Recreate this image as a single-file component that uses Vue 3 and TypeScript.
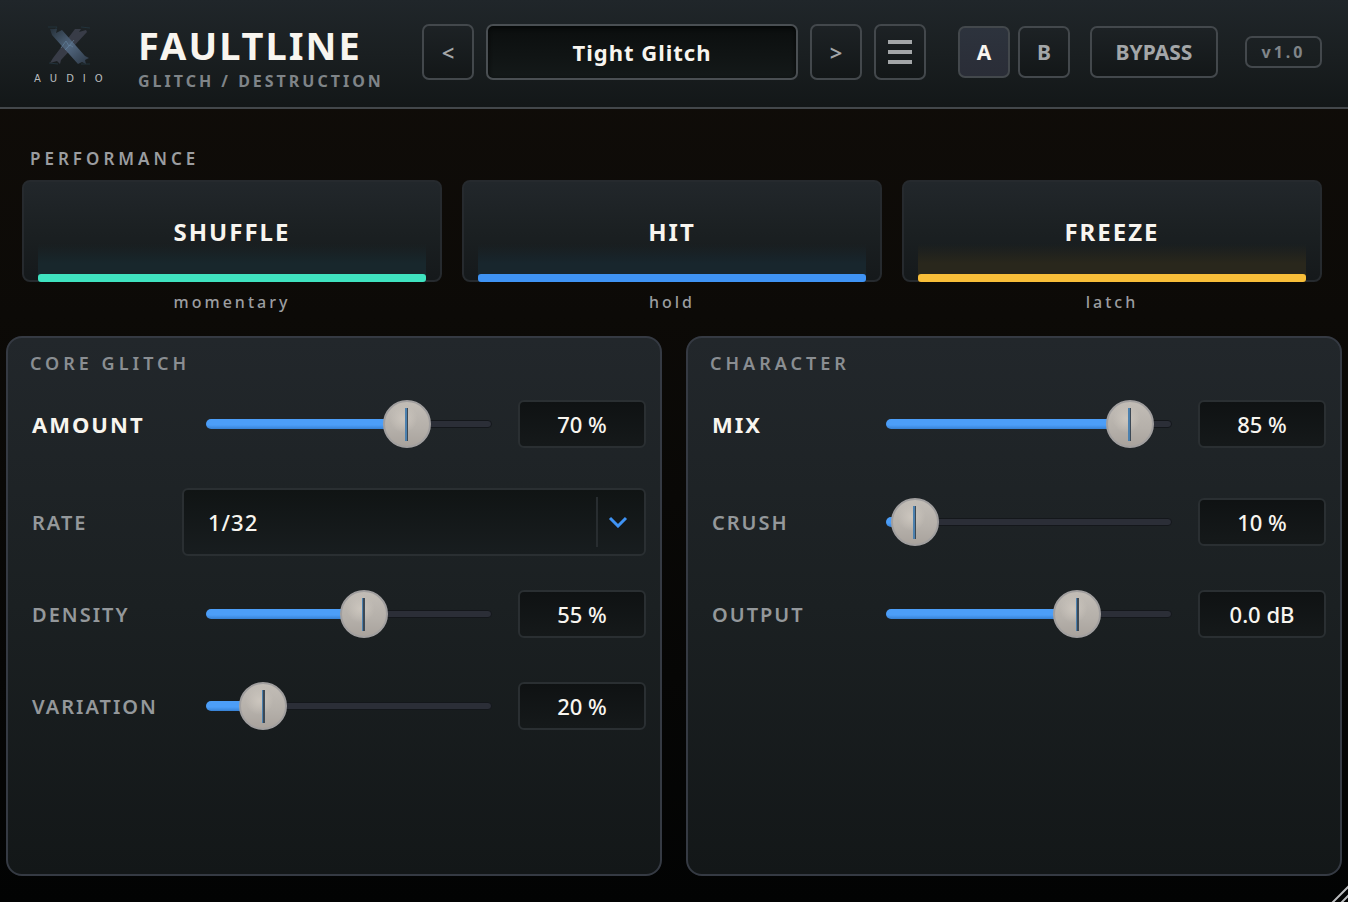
<script setup lang="ts">
import { computed, ref } from 'vue'

interface Pad {
  name: string
  mode: string
  tone: string
}

interface Param {
  id: string
  label: string
  min: number
  max: number
  step: number
  value: number
  unit: string
  digits: number
  strong?: boolean
}

const presets = ['Tight Glitch', 'Slow Tear', 'Broken Tape']
const presetIndex = ref(0)
const preset = computed(() => presets[presetIndex.value])
const stepPreset = (by: number) => {
  presetIndex.value = (presetIndex.value + by + presets.length) % presets.length
}

const slot = ref<'A' | 'B'>('A')
const bypass = ref(false)
const rate = ref('1/32')
const rates = ['1/4', '1/8', '1/16', '1/32']

const pads: Pad[] = [
  { name: 'SHUFFLE', mode: 'momentary', tone: 'teal' },
  { name: 'HIT', mode: 'hold', tone: 'blue' },
  { name: 'FREEZE', mode: 'latch', tone: 'amber' },
]

const percent = (id: string, label: string, value: number, strong = false): Param => ({
  id, label, value, strong, min: 0, max: 100, step: 1, unit: '%', digits: 0,
})

const params = ref<Record<string, Param>>({
  amount: percent('amount', 'AMOUNT', 70, true),
  density: percent('density', 'DENSITY', 55),
  variation: percent('variation', 'VARIATION', 20),
  mix: percent('mix', 'MIX', 85, true),
  crush: percent('crush', 'CRUSH', 10),
  output: { id: 'output', label: 'OUTPUT', min: -24, max: 12, step: 0.1, value: 0, unit: 'dB', digits: 1 },
})

const panels = [
  { title: 'CORE GLITCH', rows: ['amount', 'rate', 'density', 'variation'] },
  { title: 'CHARACTER', rows: ['mix', 'crush', 'output'] },
]

const fill = (p: Param) => ({ width: `${((p.value - p.min) / (p.max - p.min)) * 100}%` })
const readout = (p: Param) => `${Number(p.value).toFixed(p.digits)} ${p.unit}`
</script>

<template>
  <main class="plugin">
    <header class="top">
      <div class="brand">
        <div class="logo">
          <svg viewBox="0 0 44 40" aria-hidden="true">
            <defs>
              <linearGradient id="blade" x1="0" y1="0" x2="1" y2="1">
                <stop offset="0" stop-color="#26313a" />
                <stop offset="0.5" stop-color="#52677f" />
                <stop offset="1" stop-color="#2b3643" />
              </linearGradient>
            </defs>
            <path d="M1 1H10L8 4M34 1L43 2M2 37L11 38M34 38H43" fill="none" stroke="#22323b" />
            <path d="M28 3H34L32 6L39 4L40 6L14 34L13 38L10 35L3 37L6 32Z" fill="#383c47" />
            <path d="M3 3L10 3L9 7L15 4L38 30L42 32L38 34L39 38L35 36L31 38L5 9Z" fill="url(#blade)" />
            <path d="M14 22L19 15L22 20L27 14M18 24L23 19L26 21" fill="none" stroke="#6685a1" opacity="0.6" />
          </svg>
          <span>AUDIO</span>
        </div>
        <div class="names">
          <h1>FAULTLINE</h1>
          <p>GLITCH / DESTRUCTION</p>
        </div>
      </div>

      <nav class="presets" aria-label="Presets">
        <button class="key tall" aria-label="Previous preset" @click="stepPreset(-1)">&lt;</button>
        <button class="display">{{ preset }}</button>
        <button class="key tall" aria-label="Next preset" @click="stepPreset(1)">&gt;</button>
        <button class="key tall" aria-label="Menu">
          <svg class="bars" viewBox="0 0 24 24"><path d="M0 2H24M0 12H24M0 22H24" /></svg>
        </button>
      </nav>

      <div class="tools">
        <div class="slots">
          <button class="key bold" :class="{ on: slot === 'A' }" @click="slot = 'A'">A</button>
          <button class="key bold" :class="{ on: slot === 'B' }" @click="slot = 'B'">B</button>
        </div>
        <button class="key bold wide" :class="{ on: bypass }" @click="bypass = !bypass">BYPASS</button>
        <span class="version">v1.0</span>
      </div>
    </header>

    <section class="performance">
      <h2>PERFORMANCE</h2>
      <div class="pads">
        <div v-for="pad in pads" :key="pad.name" class="pad-cell">
          <button class="pad" :class="pad.tone">{{ pad.name }}</button>
          <span class="mode">{{ pad.mode }}</span>
        </div>
      </div>
    </section>

    <div class="panels">
      <section v-for="panel in panels" :key="panel.title" class="panel">
        <h2>{{ panel.title }}</h2>
        <div class="rows">
          <template v-for="id in panel.rows" :key="id">
            <div v-if="id === 'rate'" class="row">
              <label for="rate">RATE</label>
              <div class="select">
                <select id="rate" v-model="rate">
                  <option v-for="r in rates" :key="r">{{ r }}</option>
                </select>
                <span class="arrow">
                  <svg viewBox="0 0 20 12"><path d="M2 2L10 10L18 2" /></svg>
                </span>
              </div>
            </div>
            <div v-else class="row" :class="{ strong: params[id].strong }">
              <label :for="id">{{ params[id].label }}</label>
              <div class="control">
                <div class="slider">
                  <div class="groove"></div>
                  <div class="fill" :style="fill(params[id])"></div>
                  <input
                    :id="id"
                    v-model.number="params[id].value"
                    type="range"
                    :min="params[id].min"
                    :max="params[id].max"
                    :step="params[id].step"
                  />
                </div>
                <output :for="id">{{ readout(params[id]) }}</output>
              </div>
            </div>
          </template>
        </div>
      </section>
    </div>

    <svg class="grip" viewBox="0 0 20 20" aria-hidden="true">
      <path d="M3 22L22 3M12 22L22 12" stroke="#000000" stroke-width="4" />
      <path d="M4 21L21 4M13 21L21 13" stroke="#b9bbbd" stroke-width="2" />
    </svg>
  </main>
</template>

<style>
body {
  margin: 0;
  background: #000000;
}
</style>

<style scoped>
* {
  box-sizing: border-box;
}

.plugin {
  position: relative;
  display: flex;
  flex-direction: column;
  min-height: 100vh;
  overflow: hidden;
  background: linear-gradient(#110d09, #0c0a07 35%, #060605 75%, #020303);
  color: #f8f5ef;
  font-family: "Noto Sans", "Open Sans", sans-serif;
}

h1,
h2,
p {
  margin: 0;
}

button,
select {
  margin: 0;
  padding: 0;
  color: inherit;
  font-family: inherit;
  cursor: pointer;
}

.top {
  display: grid;
  grid-template-columns: 1fr auto 1fr;
  align-items: start;
  height: 109px;
  padding: 24px 26px 0;
  border-bottom: 2px solid #43474b;
  background: linear-gradient(#20262a, #1a1f21 50%, #131718);
}

.brand {
  display: flex;
  gap: 28px;
  padding-left: 8px;
}

.logo {
  display: flex;
  flex-direction: column;
  width: 76px;
  padding-top: 2px;
}

.logo svg {
  width: 44px;
  height: 40px;
  margin-left: 13px;
}

.logo span {
  color: #b9bcbe;
  font-family: "DejaVu Sans", sans-serif;
  font-size: 10px;
  line-height: 26px;
  letter-spacing: 9px;
}

.names h1 {
  font-size: 38px;
  font-weight: 700;
  line-height: 42px;
  letter-spacing: 2px;
}

.names p {
  color: #7f8488;
  font-size: 16px;
  font-weight: 700;
  line-height: 30px;
  letter-spacing: 3px;
  white-space: nowrap;
}

.presets {
  display: flex;
  gap: 12px;
}

.key {
  display: flex;
  align-items: center;
  justify-content: center;
  width: 52px;
  height: 52px;
  border: 2px solid #43484c;
  border-radius: 7px;
  background: linear-gradient(#1d2225, #131718);
  color: #a3a6a8;
  font-size: 22px;
  font-weight: 600;
}

.key.tall {
  height: 56px;
}

.key.bold {
  font-weight: 700;
  font-size: 21px;
}

.key.wide {
  width: 128px;
}

.key.on {
  background: linear-gradient(#2d333d, #2a2d37);
  color: #f8f5ef;
}

.bars {
  width: 24px;
  height: 24px;
  stroke: #a3a6a8;
  stroke-width: 4;
}

.display {
  width: 312px;
  height: 56px;
  border: 2px solid #4a4f53;
  border-radius: 7px;
  background: linear-gradient(#0b0e0e, #141919);
  box-shadow: inset 0 2px 4px #050707;
  font-size: 22px;
  font-weight: 700;
  letter-spacing: 1px;
}

.tools {
  display: flex;
  align-items: center;
  justify-content: flex-end;
  padding-top: 2px;
}

.slots {
  display: flex;
  gap: 8px;
  margin-right: 20px;
}

.version {
  width: 77px;
  margin-left: 27px;
  border: 2px solid #43484c;
  border-radius: 7px;
  color: #808589;
  font-size: 16px;
  font-weight: 700;
  line-height: 28px;
  letter-spacing: 3px;
  text-align: center;
}

h2 {
  color: #9b9da0;
  font-size: 17px;
  font-weight: 600;
  line-height: 24px;
  letter-spacing: 4px;
}

.performance {
  padding: 38px 26px 0 22px;
}

.performance h2 {
  padding-left: 8px;
}

.pads {
  display: grid;
  grid-template-columns: repeat(3, 1fr);
  gap: 20px;
  margin-top: 9px;
}

.pad-cell {
  display: flex;
  flex-direction: column;
}

.pad {
  position: relative;
  height: 102px;
  border: 2px solid #262a2e;
  border-radius: 8px;
  background: linear-gradient(#22272b, #1b2022 50%, #15191b);
  font-size: 24px;
  font-weight: 700;
  letter-spacing: 2px;
}

.pad::before,
.pad::after {
  content: "";
  position: absolute;
  right: 14px;
  bottom: -2px;
  left: 14px;
}

.pad::before {
  height: 38px;
  background: linear-gradient(transparent, var(--glow) 50%);
}

.pad::after {
  height: 8px;
  border-radius: 3px;
  background: var(--bar);
}

.teal {
  --bar: #3fe3c0;
  --glow: #18272c;
}

.blue {
  --bar: #3f93f4;
  --glow: #18262d;
}

.amber {
  --bar: #f8be39;
  --glow: #29271c;
}

.mode {
  color: #9b9da0;
  font-size: 16px;
  font-weight: 500;
  line-height: 40px;
  letter-spacing: 3px;
  text-align: center;
}

.panels {
  display: grid;
  flex: 1;
  grid-template-columns: 1fr 1fr;
  gap: 24px;
  margin: 14px 6px 26px;
}

.panel {
  border: 2px solid #353a43;
  border-radius: 16px;
  background: linear-gradient(#22272b, #1b2022 50%, #131718);
}

.panel h2 {
  padding: 13px 22px 0;
  color: #8a8e92;
  font-size: 18px;
}

.rows {
  display: grid;
  gap: 24px;
  padding: 9px 14px 24px 24px;
}

.row {
  display: grid;
  grid-template-columns: 150px 1fr;
  align-items: center;
  min-height: 68px;
}

.row.strong {
  min-height: 80px;
}

.row label {
  color: #94989b;
  font-size: 20px;
  font-weight: 600;
  letter-spacing: 2px;
}

.row.strong label {
  color: #f8f5ef;
  font-size: 22px;
  font-weight: 700;
}

.control {
  display: flex;
  align-items: center;
  gap: 26px;
  padding-left: 24px;
}

.slider {
  display: grid;
  flex: 1;
  align-items: center;
}

.groove,
.fill,
.slider input {
  grid-area: 1 / 1;
}

.groove {
  height: 8px;
  border: 1px solid #14171b;
  border-radius: 4px;
  background: #2b2e37;
}

.fill {
  height: 10px;
  border-radius: 5px;
  background: linear-gradient(#4c9ef8 60%, #3781d4);
}

.slider input {
  height: 48px;
  margin: 0 -25px 0 -24px;
  appearance: none;
  background: transparent;
  cursor: pointer;
}

.slider input::-webkit-slider-thumb {
  width: 48px;
  height: 48px;
  appearance: none;
  border: 2px solid #a19f9f;
  border-radius: 50%;
  background:
    linear-gradient(90deg, #4b80ae 50%, #3c4854 50%) center / 3px 33px no-repeat,
    radial-gradient(circle at 42% 38%, #ccc6be, transparent 14px),
    linear-gradient(#c2bdb6, #b5b0aa 60%, #a9a39d);
}

output {
  width: 128px;
  border: 2px solid #2a2f32;
  border-radius: 6px;
  background: linear-gradient(#0f1213, #15191a);
  font-size: 22px;
  font-weight: 500;
  line-height: 44px;
  text-align: center;
}

.select {
  display: grid;
  align-items: center;
  height: 68px;
  border: 2px solid #2a2f32;
  border-radius: 6px;
  background: linear-gradient(#101414, #181d1f);
}

.select select,
.arrow {
  grid-area: 1 / 1;
}

.select select {
  width: 100%;
  height: 64px;
  padding-left: 24px;
  appearance: none;
  border: 0;
  background: transparent;
  font-size: 22px;
  font-weight: 500;
  letter-spacing: 1px;
}

.select option {
  background: #181d1f;
}

.arrow {
  display: flex;
  justify-content: center;
  justify-self: end;
  align-items: center;
  width: 48px;
  height: 50px;
  padding-right: 6px;
  border-left: 2px solid #282d30;
  pointer-events: none;
}

.arrow svg {
  width: 20px;
  height: 12px;
  fill: none;
  stroke: #3f93f4;
  stroke-width: 3;
}

.grip {
  position: absolute;
  right: 0;
  bottom: 0;
  width: 20px;
  height: 20px;
}
</style>
